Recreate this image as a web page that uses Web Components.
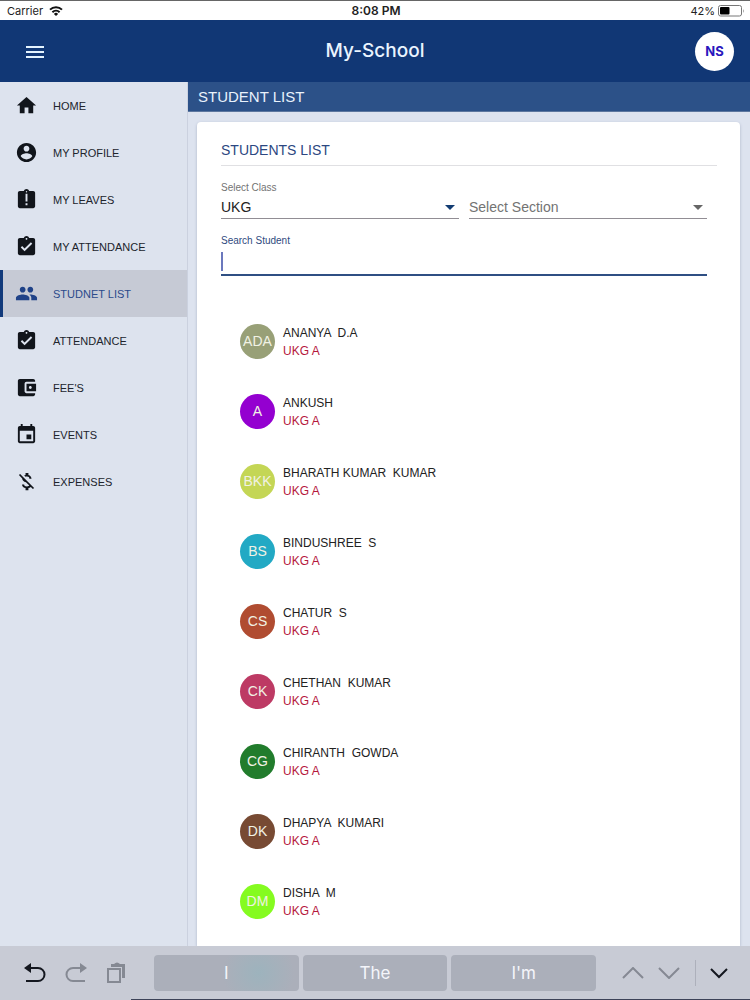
<!DOCTYPE html>
<html lang="en">
<head>
<meta charset="utf-8">
<meta name="viewport" content="width=device-width, initial-scale=1">
<title>My-School</title>
<style>
  body {
    margin: 0;
    font-family: "Liberation Sans", Arial, sans-serif;
    color: #222;
    background: #dde3ef;
  }
</style>
</head>
<body>
<school-app></school-app>

<script>
const define = (name, html, setup) => {
  const template = document.createElement('template');
  template.innerHTML = html;
  customElements.define(name, class extends HTMLElement {
    constructor() {
      super();
      this.attachShadow({ mode: 'open' });
      this.shadowRoot.appendChild(template.content.cloneNode(true));
    }
    connectedCallback() {
      if (setup) setup(this, this.shadowRoot);
    }
  });
};

const icons = {
  home: 'M10 20v-6h4v6h5v-8h3L12 3 2 12h3v8z',
  profile: 'M12 2C6.48 2 2 6.48 2 12s4.48 10 10 10 10-4.48 10-10S17.52 2 12 2zm0 3c1.66 0 3 1.34 3 3s-1.34 3-3 3-3-1.34-3-3 1.34-3 3-3zm0 14.2c-2.5 0-4.71-1.28-6-3.22.03-1.99 4-3.08 6-3.08 1.99 0 5.97 1.09 6 3.08-1.29 1.94-3.5 3.22-6 3.22z',
  leaves: 'M19 3h-4.18C14.4 1.84 13.3 1 12 1c-1.3 0-2.4.84-2.82 2H5c-1.1 0-2 .9-2 2v14c0 1.1.9 2 2 2h14c1.1 0 2-.9 2-2V5c0-1.1-.9-2-2-2zm-6 15h-2v-2h2v2zm0-4h-2V6h2v8zm-1-9.25c-.41 0-.75-.34-.75-.75s.34-.75.75-.75.75.34.75.75-.34.75-.75.75z',
  attendance: 'M19 3h-4.18C14.4 1.84 13.3 1 12 1c-1.3 0-2.4.84-2.82 2H5c-1.1 0-2 .9-2 2v14c0 1.1.9 2 2 2h14c1.1 0 2-.9 2-2V5c0-1.1-.9-2-2-2zm-7 0c.55 0 1 .45 1 1s-.45 1-1 1-1-.45-1-1 .45-1 1-1zm-2 14l-4-4 1.41-1.41L10 14.17l6.59-6.59L18 9l-8 8z',
  people: 'M16 11c1.66 0 2.99-1.34 2.99-3S17.66 5 16 5c-1.66 0-3 1.34-3 3s1.34 3 3 3zm-8 0c1.66 0 2.99-1.34 2.99-3S9.66 5 8 5C6.34 5 5 6.34 5 8s1.34 3 3 3zm0 2c-2.33 0-7 1.17-7 3.5V19h14v-2.5c0-2.33-4.67-3.5-7-3.5zm8 0c-.29 0-.62.02-.97.05 1.16.84 1.97 1.97 1.97 3.45V19h6v-2.5c0-2.33-4.67-3.5-7-3.5z',
  wallet: 'M21 18v1c0 1.1-.9 2-2 2H5c-1.11 0-2-.9-2-2V5c0-1.1.89-2 2-2h14c1.1 0 2 .9 2 2v1h-9c-1.11 0-2 .9-2 2v8c0 1.1.89 2 2 2h9zm-9-2h10V8H12v8zm4-2.500c-.83 0-1.500-.67-1.500-1.500s.67-1.500 1.500-1.500 1.500.67 1.500 1.500-.67 1.500-1.500 1.500z',
  events: 'M17 12h-5v5h5v-5zM16 1v2H8V1H6v2H5c-1.11 0-1.99.9-1.99 2L3 19c0 1.1.89 2 2 2h14c1.1 0 2-.9 2-2V5c0-1.1-.9-2-2-2h-1V1h-2zm3 18H5V8h14v11z',
  expenses: 'M12.5 6.9c1.78 0 2.44.85 2.5 2.1h2.21c-.07-1.72-1.12-3.3-3.21-3.81V3h-3v2.16c-.53.12-1.03.3-1.48.54l1.47 1.47c.41-.17.91-.27 1.51-.27zM5.33 4.06L4.06 5.33 7.5 8.77c0 2.08 1.56 3.21 3.91 3.91l3.51 3.51c-.34.48-1.05.91-2.42.91-2.06 0-2.87-.92-2.98-2.1h-2.2c.12 2.19 1.76 3.42 3.68 3.83V21h3v-2.15c.96-.18 1.82-.55 2.45-1.12l2.22 2.22 1.27-1.27L5.33 4.06z'
};

define('status-bar', `
  <style>
    :host {
      display: grid;
      grid-template-columns: 1fr auto 1fr;
      align-items: center;
      box-sizing: border-box;
      height: 20px;
      padding: 0 5px 0 7px;
      border-top: 1px solid #666;
      background: #fff;
      color: #222;
      font: 11px/18px Inter, sans-serif;
    }
    div { display: flex; align-items: center; gap: 6px; }
    .time { font-size: 12px; font-weight: 600; }
    .power { justify-content: flex-end; gap: 3px; }
  </style>
  <div>Carrier
    <svg width="14" height="10" viewBox="0 0 14 10" fill="none" stroke="#111" stroke-width="2">
      <path d="M1 3.6a8.6 8.6 0 0 1 12 0M3.4 6.2a5.2 5.2 0 0 1 7.2 0"/>
      <path d="M7 10L4.9 7.9a3 3 0 0 1 4.2 0z" fill="#111" stroke="none"/>
    </svg>
  </div>
  <div class="time">8:08 PM</div>
  <div class="power">42%
    <svg width="27" height="12" viewBox="0 0 27 12">
      <rect x=".5" y=".5" width="23" height="10.5" rx="2" fill="#fff" stroke="#777"/>
      <rect x="2" y="2" width="9.5" height="7.5" rx="1"/>
      <path d="M25 4v4q1.5-2 0-4" fill="#777"/>
    </svg>
  </div>
`);

define('app-header', `
  <style>
    :host {
      display: grid;
      grid-template-columns: 1fr auto 1fr;
      align-items: center;
      height: 62px;
      padding: 0 16px;
      background: #113775;
      color: #eaf4ff;
    }
    button { padding: 0; border: 0; font: inherit; cursor: pointer; }
    .menu { justify-self: start; display: flex; padding: 0 10px; background: none; }
    h1 { margin: 0; font: 500 19px/24px Inter, sans-serif; }
    .user {
      justify-self: end;
      width: 39px;
      height: 39px;
      border-radius: 50%;
      background: #fff;
      color: #2a17bd;
      font: bold 13px/39px Inter, sans-serif;
    }
  </style>
  <button class="menu" aria-label="Menu">
    <svg width="18" height="14" fill="#e4f3ff"><path d="M0 2h18v2H0zM0 7h18v2H0zM0 12h18v2H0z"/></svg>
  </button>
  <h1><slot></slot></h1>
  <button class="user">NS</button>
`);

define('nav-item', `
  <style>
    :host { display: block; color: #20242c; }
    a {
      display: flex;
      align-items: center;
      gap: 15px;
      height: 47px;
      padding-left: 12px;
      border-left: 3px solid transparent;
      color: inherit;
      font-size: 11px;
      text-decoration: none;
    }
    svg { width: 23px; height: 23px; fill: #11151b; }
    :host([active]) { color: #2b4a8b; }
    :host([active]) a { background: #c6cad5; border-color: #123a7b; }
    :host([active]) svg { fill: #1f4288; }
  </style>
  <a href="#"><svg viewBox="0 0 24 24" aria-hidden="true"><path/></svg><slot></slot></a>
`, (el, root) => {
  root.querySelector('path').setAttribute('d', icons[el.getAttribute('icon')]);
});

define('side-nav', `
  <style>
    :host { display: block; width: 187px; border-right: 1px solid #cbd1df; background: #dde3ee; }
  </style>
  <nav>
    <nav-item icon="home">HOME</nav-item>
    <nav-item icon="profile">MY PROFILE</nav-item>
    <nav-item icon="leaves">MY LEAVES</nav-item>
    <nav-item icon="attendance">MY ATTENDANCE</nav-item>
    <nav-item icon="people" active>STUDNET LIST</nav-item>
    <nav-item icon="attendance">ATTENDANCE</nav-item>
    <nav-item icon="wallet">FEE'S</nav-item>
    <nav-item icon="events">EVENTS</nav-item>
    <nav-item icon="expenses">EXPENSES</nav-item>
  </nav>
`);

define('search-form', `
  <style>
    :host { display: block; padding: 15px 10px 0 0; }
    form { display: grid; grid-template-columns: 1fr 1fr; gap: 15px 10px; }
    .field { display: flex; flex-direction: column; justify-content: flex-end; }
    .field.wide { grid-column: 1 / -1; }
    label { color: #737373; font-size: 10px; line-height: 14px; }
    .wide label { color: #2f4a80; }
    .picker { display: grid; align-items: center; }
    .picker > * { grid-area: 1 / 1; }
    .picker svg { justify-self: end; margin-right: 4px; fill: #666; pointer-events: none; }
    .picker.chosen svg { fill: #123c72; }
    select, input {
      box-sizing: border-box;
      width: 100%;
      margin: 0;
      padding: 0;
      border: 0;
      border-radius: 0;
      outline: 0;
      background: none;
      color: #737373;
      font: 14px "Liberation Sans", Arial, sans-serif;
    }
    select { appearance: none; height: 24px; border-bottom: 1px solid #918d94; }
    .chosen select { color: #222; }
    input {
      height: 28px;
      border-bottom: 2px solid #2f4f83;
      background: linear-gradient(#6b78bd, #6b78bd) 0 4px / 2px 19px no-repeat;
      caret-color: transparent;
    }
  </style>
  <form>
    <div class="field">
      <label for="class">Select Class</label>
      <div class="picker chosen">
        <select id="class"><option>UKG</option></select>
        <svg width="10" height="5"><path d="M0 0h10L5 5z"/></svg>
      </div>
    </div>
    <div class="field">
      <div class="picker">
        <select aria-label="Select Section"><option>Select Section</option></select>
        <svg width="10" height="5"><path d="M0 0h10L5 5z"/></svg>
      </div>
    </div>
    <div class="field wide">
      <label for="search">Search Student</label>
      <input id="search" type="text" autocomplete="off">
    </div>
  </form>
`);

define('student-row', `
  <style>
    :host {
      display: flex;
      align-items: center;
      gap: 8px;
      height: 70px;
      padding-left: 19px;
      font-size: 12px;
      line-height: 18px;
    }
    .avatar {
      width: 35px;
      border-radius: 50%;
      color: #f1f2e4;
      font-size: 14px;
      line-height: 35px;
      text-align: center;
    }
    .text { padding-top: 2px; }
    .name { white-space: pre; }
    .group { color: #b5173c; }
  </style>
  <div class="avatar"></div>
  <div class="text">
    <div class="name"><slot></slot></div>
    <div class="group">UKG A</div>
  </div>
`, (el, root) => {
  const avatar = root.querySelector('.avatar');
  avatar.textContent = el.getAttribute('initials');
  avatar.style.background = el.getAttribute('color');
});

define('student-card', `
  <style>
    :host {
      display: block;
      flex: 1;
      margin: 10px 10px 0 9px;
      padding: 18px 23px 0 24px;
      border-radius: 4px 4px 0 0;
      background: #fff;
      box-shadow: 0 1px 3px #aab3c7;
    }
    h2 {
      margin: 0;
      padding-bottom: 5px;
      border-bottom: 1px solid #e0e0e3;
      color: #2c4781;
      font-size: 14px;
      font-weight: normal;
      line-height: 20px;
    }
    .list { margin-top: 30px; }
  </style>
  <h2>STUDENTS LIST</h2>
  <search-form></search-form>
  <div class="list">
    <student-row initials="ADA" color="#98a077">ANANYA  D.A</student-row>
    <student-row initials="A" color="#9400d0">ANKUSH</student-row>
    <student-row initials="BKK" color="#c4d655">BHARATH KUMAR  KUMAR</student-row>
    <student-row initials="BS" color="#22a9c4">BINDUSHREE  S</student-row>
    <student-row initials="CS" color="#b04c31">CHATUR  S</student-row>
    <student-row initials="CK" color="#bd3a64">CHETHAN  KUMAR</student-row>
    <student-row initials="CG" color="#217c2c">CHIRANTH  GOWDA</student-row>
    <student-row initials="DK" color="#774a33">DHAPYA  KUMARI</student-row>
    <student-row initials="DM" color="#85fb20">DISHA  M</student-row>
  </div>
`);

define('keyboard-bar', `
  <style>
    :host {
      display: flex;
      position: sticky;
      bottom: 0;
      box-sizing: border-box;
      height: 54px;
      padding: 9px 0;
      background: linear-gradient(#3d4358, #3d4358) 131px 100% / 100% 1px no-repeat, #c8cbd5;
    }
    button { padding: 0; border: 0; background: none; }
    svg { display: block; fill: none; stroke: #858993; stroke-width: 2; }
    .tools { display: flex; align-items: center; justify-content: space-between; box-sizing: border-box; width: 154px; }
    .edit { padding: 0 28px 0 24px; }
    .move { padding: 0 22px 0 26px; }
    .dark { stroke: #14171f; }
    .words { display: flex; flex: 1; gap: 4px; }
    .words button {
      flex: 1;
      border-radius: 4px;
      background: #abafba;
      color: #f4f5fa;
      font: 17px Inter, sans-serif;
    }
    .words button:first-child { background: radial-gradient(circle at 72% 50%, #9db3bd, #abafba 34%); }
    .line { width: 1px; height: 26px; background: #adb0bb; }
  </style>
  <div class="tools edit">
    <button aria-label="Undo">
      <svg class="dark" width="22" height="22"><path d="M6 6h8a6.500 6.500 0 0 1 0 13H2"/><path d="M7 1v10L0 6z" fill="#14171f" stroke="none"/></svg>
    </button>
    <button aria-label="Redo">
      <svg width="22" height="22"><path d="M16 6H8a6.500 6.500 0 0 0 0 13H20"/><path d="M15 1v10l7-5z" fill="#858993" stroke="none"/></svg>
    </button>
    <button aria-label="Paste">
      <svg width="20" height="22"><path d="M2 7h12v13H2z"/><path d="M5 5V2h3q3-3 6 0h5v14h-3V5z" fill="#858993" stroke="none"/></svg>
    </button>
  </div>
  <div class="words">
    <button>I</button>
    <button>The</button>
    <button>I'm</button>
  </div>
  <div class="tools move">
    <button aria-label="Previous field"><svg width="22" height="12"><path d="M1 11L11 1l10 10"/></svg></button>
    <button aria-label="Next field"><svg width="22" height="12"><path d="M1 1l10 10L21 1"/></svg></button>
    <span class="line"></span>
    <button aria-label="Hide keyboard"><svg class="dark" width="18" height="12"><path d="M1 2l8 8 8-8"/></svg></button>
  </div>
`);

define('school-app', `
  <style>
    :host { display: flex; flex-direction: column; min-height: 100vh; }
    .body { display: flex; flex: 1; }
    main { display: flex; flex: 1; flex-direction: column; min-width: 0; }
    .title {
      padding: 0 10px;
      background: #2c5188;
      border-bottom: 1px solid #5d779f;
      color: #e9f2fc;
      font-size: 15px;
      line-height: 29px;
    }
  </style>
  <status-bar></status-bar>
  <app-header>My-School</app-header>
  <div class="body">
    <side-nav></side-nav>
    <main>
      <div class="title">STUDENT LIST</div>
      <student-card></student-card>
    </main>
  </div>
  <keyboard-bar></keyboard-bar>
`);
</script>
</body>
</html>
